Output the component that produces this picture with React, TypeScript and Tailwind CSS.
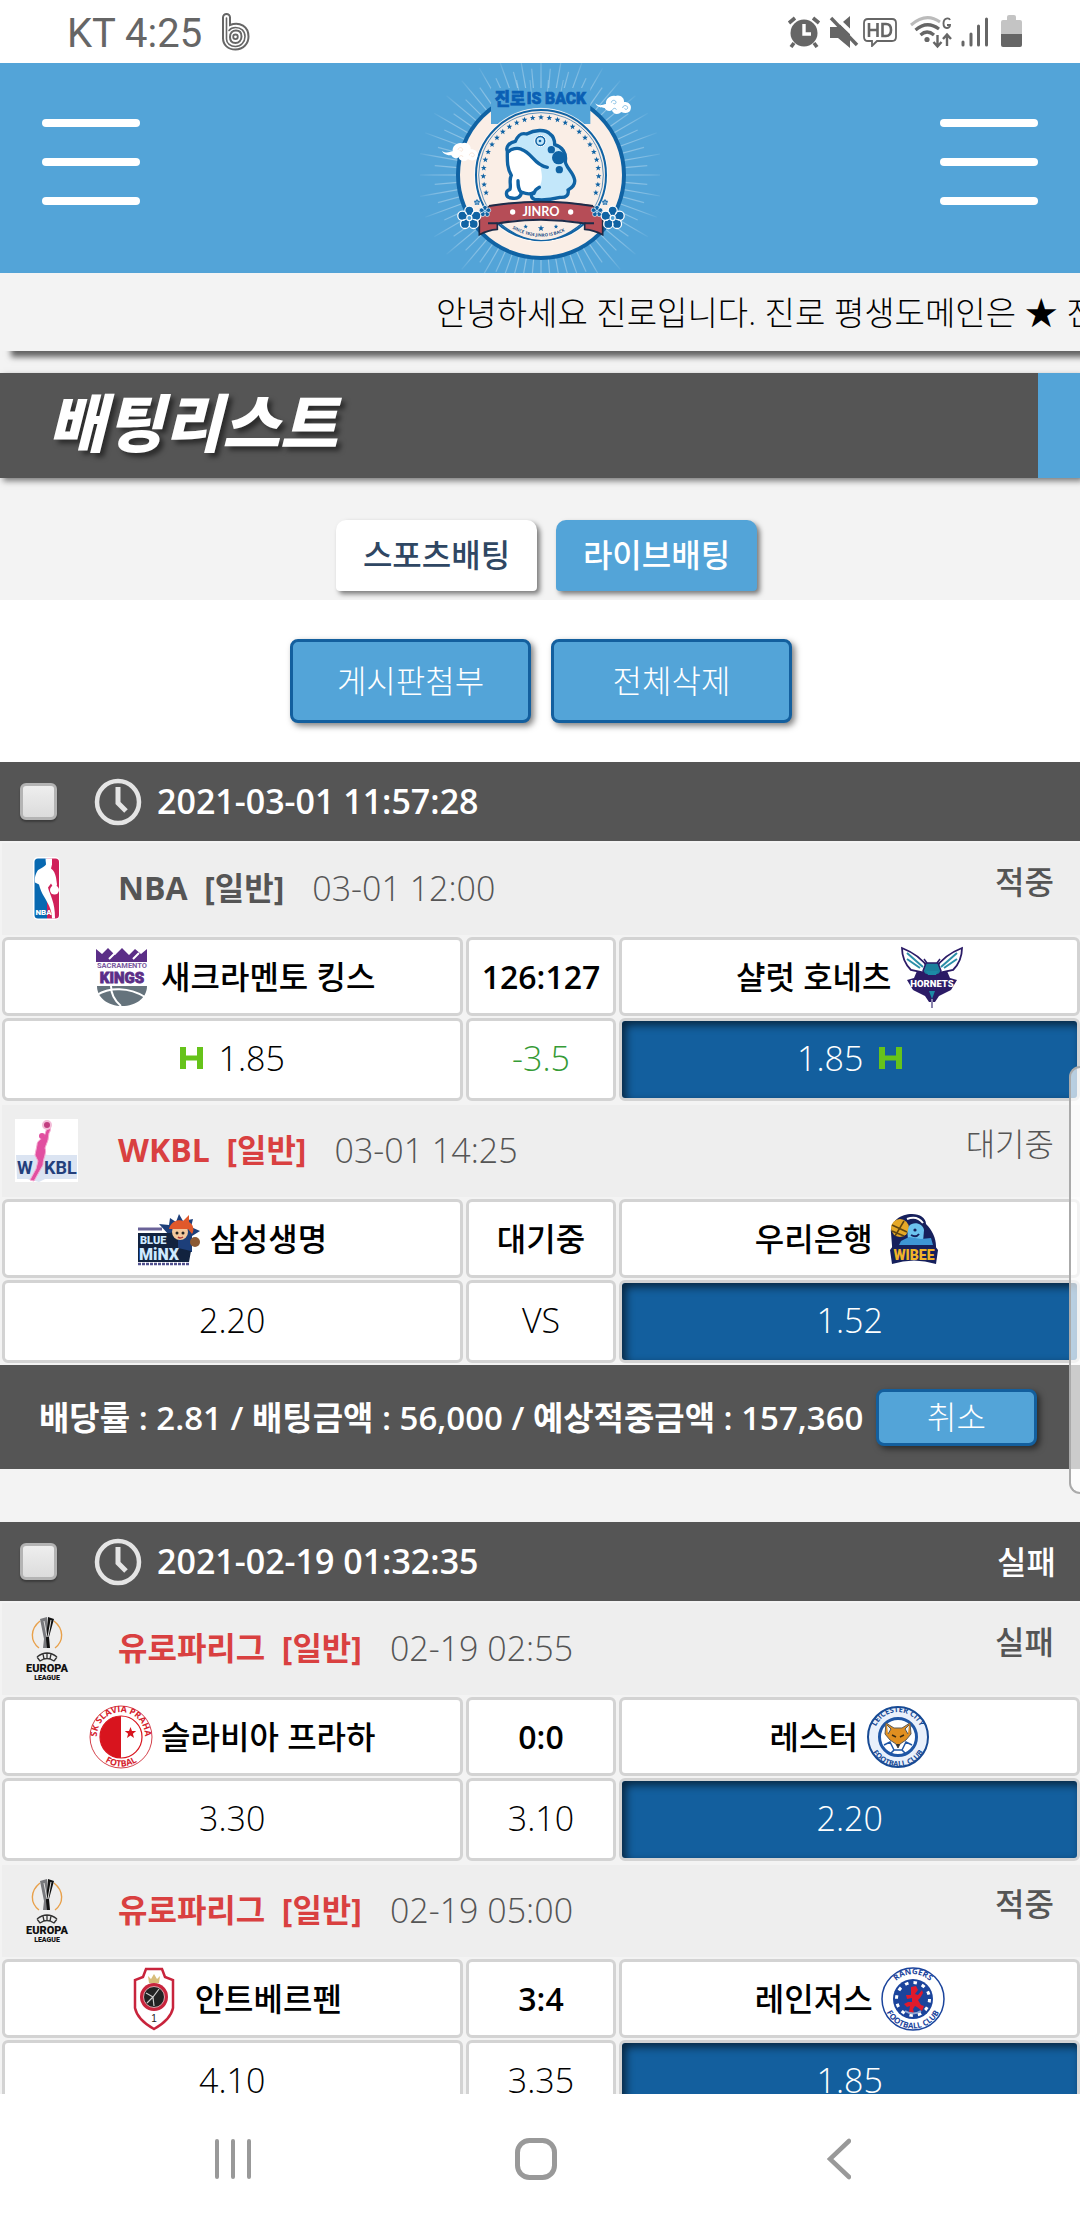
import type { ReactNode } from "react";

/* ---------- status bar icons ---------- */

const BandIcon = () => (
  <svg viewBox="0 0 30 38" className="h-[38px] w-[30px]" fill="none" stroke="#666" strokeLinecap="round">
    <path d="M3 26V4.500a3.500 3.500 0 0 1 7 0V12c10-4 18.500 2 18.500 11.500C28.500 31 23 36.500 15.500 36.500S3 32 3 25" strokeWidth="2" />
    <path d="M6.500 5v21c0 4.500 4 7.500 9 7.500 5.500 0 9.500-4.500 9.500-10s-4-9-9.500-9c-3 0-5 1-6.500 3" strokeWidth="1.600" />
    <path d="M10 24c0-4 2.500-6.500 6-6.500s5.500 2.500 5.500 6-2.500 6.500-6 6.500-5.500-2.500-5.500-6z" strokeWidth="2" />
    <circle cx="15.500" cy="23.800" r="2.300" strokeWidth="1.800" />
  </svg>
);

const AlarmIcon = () => (
  <svg viewBox="0 0 34 32" className="h-8 w-[34px]">
    <circle cx="17" cy="17" r="13.500" fill="#666" />
    <path d="M7 27l-3 4M27 27l3 4M2 7l6-5M32 7l-6-5" stroke="#666" strokeWidth="3.600" />
    <path d="M17 8v10h7" fill="none" stroke="#fff" strokeWidth="3.400" />
  </svg>
);

const MuteIcon = () => (
  <svg viewBox="0 0 30 32" className="h-8 w-[30px]">
    <path d="M1 11h7L21 0v32L9 22H1z" fill="#666" />
    <path d="M4-1 32 26" stroke="#fff" strokeWidth="4" />
    <path d="M2 2 28 29" stroke="#666" strokeWidth="3.400" />
  </svg>
);

const HdIcon = () => (
  <svg viewBox="0 0 34 30" className="h-[30px] w-[34px]">
    <path d="M5 2h24q4 0 4 4v14q0 4-4 4H14l-5 5v-5H5q-4 0-4-4V6q0-4 4-4z" fill="none" stroke="#666" strokeWidth="1.800" />
    <path d="M6 6v14M14.500 6v14M6 13h8.500M19.500 7v12h3.500c4 0 5-3 5-6s-1-6-5-6z" fill="none" stroke="#666" strokeWidth="2.600" />
  </svg>
);

const WifiIcon = () => (
  <svg viewBox="0 0 44 34" className="h-[34px] w-11" fill="none">
    <path d="M2 10Q17-3 31 7" stroke="#bbb" strokeWidth="3" />
    <path d="M6.500 15Q18 5 30 14M11.500 20Q18 14 25 20" stroke="#666" strokeWidth="3.200" />
    <circle cx="18" cy="24.500" r="2.600" fill="#666" />
    <path d="M28.500 20v11M24.500 27l4 4.500 4-4.500M38 31V20M34 24l4-4.500 4 4.500" stroke="#666" strokeWidth="2.400" />
    <path d="M41 5c-1-2.500-6.500-2.500-6.500 3.500s6.500 5.500 6.500 1.500H38" stroke="#666" strokeWidth="1.900" />
  </svg>
);

const SignalIcon = () => (
  <svg viewBox="0 0 28 30" className="h-[30px] w-7" stroke="#666" strokeWidth="3" strokeLinecap="round">
    <path d="M2 25v3M10 17v11M17.500 9v19M25.500 2v26" />
  </svg>
);

const BatteryIcon = () => (
  <svg viewBox="0 0 21 33" className="h-[33px] w-[21px]">
    <path d="M6 2q0-2 2-2h5q2 0 2 2v3h4q2 0 2 2v12H0V7q0-2 2-2h4z" fill="#c4c4c4" />
    <path d="M0 19h21v11q0 2-2 2H2q-2 0-2-2z" fill="#666" />
  </svg>
);

/* ---------- brand emblem ---------- */

const starPath = (cx: number, cy: number, r: number) =>
  Array.from({ length: 10 }, (_, i) => {
    const rad = i % 2 ? r * 0.42 : r;
    const a = (Math.PI / 5) * i - Math.PI / 2;
    return `${i ? "L" : "M"}${(cx + rad * Math.cos(a)).toFixed(1)} ${(cy + rad * Math.sin(a)).toFixed(1)}`;
  }).join("") + "Z";

const Flower = ({ x, y, r }: { x: number; y: number; r: number }) => (
  <g>
    {[0, 1, 2, 3, 4].map((i) => {
      const a = (i * 72 - 90) * (Math.PI / 180);
      return (
        <circle key={i} cx={x + r * 0.58 * Math.cos(a)} cy={y + r * 0.58 * Math.sin(a)} r={r * 0.36} fill="#1063a4" stroke="#fff" strokeWidth={r * 0.1} />
      );
    })}
    <circle cx={x} cy={y} r={r * 0.42} fill="#1063a4" />
    <circle cx={x} cy={y} r={r * 0.2} fill="#53a4d8" stroke="#fff" strokeWidth={r * 0.1} />
    {[0, 1, 2, 3, 4].map((i) => {
      const a = (i * 72 - 54) * (Math.PI / 180);
      return (
        <path key={i} d={`M${x + r * 0.25 * Math.cos(a)} ${y + r * 0.25 * Math.sin(a)}L${x + r * 0.55 * Math.cos(a)} ${y + r * 0.55 * Math.sin(a)}`} stroke="#fff" strokeWidth={r * 0.08} />
      );
    })}
  </g>
);

const Cloud = ({ x, y, tint }: { x: number; y: number; tint: string }) => (
  <g transform={`translate(${x} ${y})`}>
    <path d="M0 24c12 10 22 4 32 2-2-16 14-28 28-24 12-6 28 4 26 18 14 0 24 8 20 22-2 12-18 14-28 8-10 10-26 6-28-6-8 8-20 0-22-6-12 0-24-4-28-14z" fill="#fff" />
    <g fill="none" stroke={tint} strokeWidth="2">
      <path d="M48 22c0-8 12-10 14-2 1 5-6 8-8 3" />
      <path d="M82 38c0-9 14-10 15-1 0 6-8 7-9 2" />
      <path d="M52 44c0-6 10-7 11-1" />
    </g>
  </g>
);

const Emblem = () => (
  <svg viewBox="0 9 720 630" className="h-[210px] w-60" role="img" aria-label="진로 IS BACK">
    <defs>
      <radialGradient id="rayFade" gradientUnits="userSpaceOnUse" cx="363" cy="345" r="380">
        <stop offset="0.6" stopColor="#fff" stopOpacity="0.4" />
        <stop offset="0.85" stopColor="#fff" stopOpacity="0.25" />
        <stop offset="1" stopColor="#fff" stopOpacity="0" />
      </radialGradient>
      <path id="motto" d="M268 500Q363 560 458 500" />
    </defs>
    {Array.from({ length: 72 }, (_, i) => {
      const a = (i * 5 * Math.PI) / 180;
      const len = i % 2 ? 320 : 370;
      return (
        <path key={i} d={`M${363 + 200 * Math.cos(a)} ${345 + 200 * Math.sin(a)}L${363 + len * Math.cos(a)} ${345 + len * Math.sin(a)}`} stroke="url(#rayFade)" strokeWidth="3.500" />
      );
    })}
    <circle cx="363" cy="345" r="249" fill="#faeee6" stroke="#1063a4" strokeWidth="12" />
    <path d="M213 84H511V192H213z" fill="#53a4d8" />
    <path d="M290 60l12 60M330 60l6 60M385 60l-4 60M430 60l-12 60" stroke="#fff" strokeOpacity="0.25" strokeWidth="3" />
    <circle cx="363" cy="345" r="200" fill="#faeee6" stroke="#fff" strokeWidth="2" />
    <circle cx="363" cy="345" r="195" fill="none" stroke="#1063a4" strokeWidth="6" />
    <circle cx="363" cy="345" r="187" fill="none" stroke="#1063a4" strokeWidth="2" />
    {Array.from({ length: 27 }, (_, i) => {
      const a = ((i - 13) * 8.3 - 90) * (Math.PI / 180);
      return <path key={i} d={starPath(363 + 173 * Math.cos(a), 345 + 173 * Math.sin(a), 9)} fill="#1063a4" />;
    })}
    <g fill="#0a5fb4" stroke="#0a5fb4" strokeWidth="2">
      <text x="224" y="134" fontSize="50" fontWeight="900" fontFamily='"Noto Sans CJK KR", sans-serif'>진로</text>
      <text x="320" y="132" fontSize="47" fontWeight="900" fontFamily="Roboto, sans-serif">IS BACK</text>
    </g>
    <path d="M262 274c-6-14 6-26 24-30 6-14 14-28 34-22 22-12 56-16 70 0 12 8 14 18 14 32 22 6 36 24 32 50 0 18 24 32 28 56 2 16-8 24-20 30 4 14-6 24-24 22-24 6-50 10-76 6-12-4-12-14-4-20-14 8-26 2-36-2 0 14-12 22-30 18-20-2-18-22-4-26 4-14-4-26 4-42-14-24-12-46-12-72z" fill="#c3e7fa" />
    <path d="M264 276c10-10 28-14 40-8 24 8 34 28 56 46 6 28 10 44-2 68l-14 20c-14 2-32 0-40-8-2 16-20 18-30 16-18-2-14-16-4-22 2-14-4-26 4-42-12-22-14-50-10-70z" fill="#fff" />
    <g fill="none" stroke="#1063a4" strokeWidth="10" strokeLinecap="round" strokeLinejoin="round">
      <path d="M262 274c-6-14 6-26 24-30 6-14 14-28 34-22 22-12 56-16 70 0 12 8 14 18 14 32 22 6 36 24 32 50 0 18 24 32 28 56 2 16-8 24-20 30 4 14-6 24-24 22-24 6-50 10-76 6-12-4-12-14-4-20-14 8-26 2-36-2 0 14-12 22-30 18-20-2-18-22-4-26 4-14-4-26 4-42-14-24-12-46-12-72" />
      <path d="M264 276c10-10 28-14 40-8 32 10 40 48 78 54M294 362c0 14 0 26 10 36M342 400c2-8 8-14 16-18" />
    </g>
    <circle cx="361" cy="243" r="17" fill="#1063a4" stroke="#fff" strokeWidth="3" />
    <circle cx="361" cy="243" r="11" fill="#c3e7fa" />
    <circle cx="360" cy="243" r="4" fill="#1063a4" />
    <circle cx="394" cy="269" r="11" fill="#1063a4" />
    <circle cx="416" cy="293" r="20" fill="#1063a4" />
    <circle cx="418" cy="329" r="11" fill="#1063a4" />
    <path d="M242 492Q363 592 484 492" fill="#faeee6" stroke="#1063a4" strokeWidth="4" />
    <path d="M207 440 178 460V524Q204 510 232 508V490zM519 440 548 460V524Q522 510 494 508V490z" fill="#b64d57" stroke="#1c2c49" strokeWidth="5" />
    <path d="M207 436Q363 412 519 436V486L490 488Q363 466 236 488L207 486z" fill="#b64d57" />
    <path d="M207 438Q363 412 519 438M204 490H236Q363 468 490 490H522" fill="none" stroke="#1c2c49" strokeWidth="6" />
    <text x="363" y="468" textAnchor="middle" fontSize="38" fontWeight="700" fill="#fff" fontFamily='Lato, "Open Sans", sans-serif'>JINRO</text>
    <circle cx="278" cy="456" r="8" fill="#fff" />
    <circle cx="452" cy="456" r="8" fill="#fff" />
    <path d={starPath(317, 500, 7) + starPath(363, 505, 10) + starPath(408, 500, 7)} fill="#1063a4" />
    <text fontSize="13" fontWeight="700" fill="#1c4f86" fontFamily='"Open Sans", sans-serif'>
      <textPath href="#motto" startOffset="10">SINCE 1924 JINRO IS BACK</textPath>
    </text>
    <Flower x={148} y={474} r={38} />
    <Flower x={578} y={474} r={38} />
    <Flower x={195} y={454} r={19} />
    <Flower x={531} y={454} r={19} />
    <Flower x={171} y={427} r={10} />
    <Flower x={555} y={427} r={10} />
    <Cloud x={526} y={106} tint="#53a4d8" />
    <Cloud x={66} y={248} tint="#f3d9c8" />
  </svg>
);

/* ---------- league and team logos ---------- */

const NbaLogo = () => (
  <svg viewBox="0 0 64 64" className="size-16 shrink-0">
    <rect x="18" y="0" width="27" height="63" rx="5" fill="#fff" />
    <path d="M23 1.500h9v60h-9q-3.500 0-3.500-3.500V5q0-3.500 3.500-3.500z" fill="#0869b1" />
    <path d="M32 1.500h8.500q3.500 0 3.500 3.500v53q0 3.500-3.500 3.500H32z" fill="#d0215a" />
    <path d="M31 1.500h6v6l-1 4c3 2 4 5 5 9l1 7-2 6-4-7-3 4c2 8 7 14 7 31h-3c0-9-4-15-8-22-2-3-4-8-5-12l-4-2c-1-6 2-12 4-13 3-2 6-3 7-5 0-3-1-5 0-7z" fill="#fff" />
    <circle cx="39.500" cy="33" r="4.500" fill="#fff" />
    <text x="20.500" y="58" fontSize="8" fontWeight="900" fill="#fff" fontFamily="Roboto, sans-serif">NBA</text>
  </svg>
);

const WkblLogo = () => (
  <svg viewBox="0 0 64 64" className="size-16 shrink-0">
    <rect width="63" height="63" fill="#fff" />
    <path d="M1 36h22l5-1 5 1h29v24H30l-6 3-12-3H2z" fill="#dbe4f2" />
    <g fontSize="18" fontWeight="700" fill="#243f7c" fontFamily="Roboto, sans-serif">
      <text x="2" y="55">W</text>
      <text x="29" y="55">KBL</text>
    </g>
    <path d="M33 6c3 0 3 6 1 8l-1 7-3 8c2 5-2 10-2 17l-4 7-5 9-4-1 6-11 2-8-3-6 2-10c0-4 4-6 7-8z" fill="#e14fa0" stroke="#f5a9d0" strokeWidth="1" />
    <circle cx="27" cy="17" r="3" fill="#e14fa0" />
    <circle cx="32" cy="6" r="4" fill="#c23d80" stroke="#f3bcd8" strokeWidth="2" />
  </svg>
);

const EuropaLogo = () => (
  <svg viewBox="0 0 64 64" className="size-16 shrink-0">
    <path d="M25 4C15 12 15 24 24 31M39 4c10 8 10 20 1 27" fill="none" stroke="#e8a04a" strokeWidth="1.400" />
    <path d="M25 2l7-2v20l2 11h-6l1-9z" fill="#77787c" />
    <path d="M33 0l6 2-5 18 1 11h-3l-1-9z" fill="#111" />
    <path d="M29 4l3 16M36 3l-3 17" stroke="#ddd" strokeWidth="1" />
    <path d="M22 40q10-8 20 0M25 44q7-5 14 0M22 40l3 4M42 40l-3 4M28 37l1 5M36 37l-1 5M32 36v6" fill="none" stroke="#333" strokeWidth="1.300" />
    <text x="32" y="55" textAnchor="middle" fontSize="11" fontWeight="900" fill="#111" fontFamily="Roboto, sans-serif">EUROPA</text>
    <text x="32" y="63" textAnchor="middle" fontSize="7" fontWeight="900" fill="#111" fontFamily="Roboto, sans-serif">LEAGUE</text>
  </svg>
);

const KingsLogo = () => (
  <svg viewBox="0 0 64 64" className="size-16 shrink-0">
    <path d="M7 4l6 5 6-6 7 7 7-7 7 7 6-6 6 5 6-5v13H7z" fill="#5b2e87" />
    <path d="M20 14l6-6M44 14l6-6" stroke="#fff" strokeWidth="2" />
    <text x="33" y="23" textAnchor="middle" fontSize="7.500" fontWeight="700" fill="#7a5aa0" fontFamily="Roboto, sans-serif">SACRAMENTO</text>
    <text x="33" y="38" textAnchor="middle" fontSize="15" fontWeight="900" fill="#5b2e87" stroke="#5b2e87" strokeWidth="0.8" fontFamily="Roboto, sans-serif">KINGS</text>
    <path d="M8 41h50c0 12-11 20-25 20S8 53 8 41z" fill="#65737c" />
    <path d="M8 50c12-8 32-8 48 2M22 41c0 8 4 15 10 20" fill="none" stroke="#fff" strokeWidth="2" />
  </svg>
);

const HornetsLogo = () => (
  <svg viewBox="0 0 64 64" className="size-16 shrink-0">
    <path d="M3 3c10 4 20 10 26 20l-3 5-14-3c-6-6-9-14-9-22zM63 3c-10 4-20 10-26 20l3 5 14-3c6-6 9-14 9-22z" fill="#fff" stroke="#2b1b66" strokeWidth="1.800" />
    <path d="M8 8l16 14M8 14l13 9M58 8 42 22M58 14l-13 9" stroke="#2b8fa8" strokeWidth="2" />
    <path d="M28 18l-3-4M38 18l3-4" stroke="#2b1b66" strokeWidth="1.500" />
    <path d="M27 18h12l3 8-3 6H27l-3-6z" fill="#1c7f9c" stroke="#2b1b66" strokeWidth="1.500" />
    <path d="M18 26l10 3h10l10-3 3 7 7 2-6 10-12 6-4 6h-6l-4-6-12-6-6-10 7-2z" fill="#2b1b66" />
    <path d="M27 26h12l-2 4h-8zM30 46h6l-3 8z" fill="#1c8aa5" />
    <text x="33" y="42" textAnchor="middle" fontSize="9.500" fontWeight="900" fill="#fff" fontFamily="Roboto, sans-serif">HORNETS</text>
    <path d="M33 54v9" stroke="#8a84ad" strokeWidth="2" />
  </svg>
);

const BlueMinxLogo = () => (
  <svg viewBox="0 0 64 64" className="size-16 shrink-0">
    <path d="M22 17l10 1 1-7 6 4 3-8 4 7 10-2-2 8 9 4-8 5v16H32V28z" fill="#1d3f7a" />
    <path d="M1 26h32l8-3v18l13 3-2 11H1z" fill="#12233f" />
    <path d="M1 22h24" stroke="#6a6298" strokeWidth="3" />
    <circle cx="43" cy="25" r="8" fill="#f3c79c" />
    <path d="M32 22c2-8 10-10 14-8l6-6v7c4 2 6 8 3 12l-4-5z" fill="#e0592b" />
    <circle cx="40" cy="26" r="1.500" fill="#222" />
    <circle cx="46" cy="26" r="1.500" fill="#222" />
    <path d="M41 30q2 2 5 0" stroke="#a33" strokeWidth="1.500" fill="none" />
    <circle cx="58" cy="35" r="5" fill="#8c5a34" />
    <g fontWeight="900" fill="#cfeaff" fontFamily="Roboto, sans-serif">
      <text x="3" y="37" fontSize="11">BLUE</text>
      <text x="2" y="53" fontSize="16">MiNX</text>
    </g>
    <path d="M1 57h52" stroke="#51508f" strokeWidth="2.500" strokeDasharray="3 1" />
  </svg>
);

const WibeeLogo = () => (
  <svg viewBox="0 0 64 64" className="size-16 shrink-0">
    <path d="M10 26C9 14 20 7 31 7c8 0 14 4 14 10 6 6 10 14 10 22v12H12z" fill="#16205c" />
    <circle cx="19" cy="21" r="9" fill="#e5a827" />
    <path d="M11 18l15 7M14 29l9-15M11 24l12 5" stroke="#5e4512" strokeWidth="1.500" />
    <path d="M26 12q10-4 16 4" stroke="#fff" strokeWidth="2" fill="none" />
    <path d="M28 19c4-5 14-3 15 4l-1 12H28c-2-5-2-11 0-16z" fill="#6cc2ee" />
    <path d="M20 34l8-4 12 2 10-1 2 7H18z" fill="#3e95d4" />
    <circle cx="34" cy="23" r="1.600" fill="#16205c" />
    <path d="M30 28q5 3 8-1" stroke="#16205c" strokeWidth="2" fill="none" />
    <path d="M12 39q21 4 42 0l3 4-2 14q-22-7-44 0L9 43z" fill="#16205c" />
    <text x="33" y="53" textAnchor="middle" fontSize="14" fontWeight="900" fill="#f0b429" fontFamily="Roboto, sans-serif">WIBEE</text>
  </svg>
);

const RingText = ({ id, top, bottom, color, size }: { id: string; top: string; bottom: string; color: string; size: number }) => (
  <>
    <defs>
      <path id={`${id}Top`} d="M8.500 36A24 24 0 1 1 55.500 36" />
      <path id={`${id}Bottom`} d="M2.500 32A29.500 29.500 0 0 0 61.500 32" />
    </defs>
    <g fontSize={size} fontWeight="700" fill={color} fontFamily='"Open Sans", sans-serif' textAnchor="middle">
      <text><textPath href={`#${id}Top`} startOffset="50%">{top}</textPath></text>
      <text><textPath href={`#${id}Bottom`} startOffset="50%">{bottom}</textPath></text>
    </g>
  </>
);

const SlaviaLogo = () => (
  <svg viewBox="0 0 64 64" className="size-16 shrink-0">
    <circle cx="32" cy="32" r="31" fill="#fff" stroke="#d4424c" strokeWidth="1" />
    <RingText id="slavia" top="SK SLAVIA PRAHA" bottom="FOTBAL" color="#d5202c" size={8.8} />
    <circle cx="32" cy="32" r="21" fill="#fff" stroke="#d8141e" strokeWidth="1.200" />
    <path d="M32 11a21 21 0 0 0 0 42z" fill="#d8141e" />
    <path d={starPath(41.5, 28, 6)} fill="#d8141e" />
  </svg>
);

const LeicesterLogo = () => (
  <svg viewBox="0 0 64 64" className="size-16 shrink-0">
    <circle cx="32" cy="32" r="30" fill="#e9f0fb" stroke="#174a94" strokeWidth="2" />
    <RingText id="leicester" top="LEICESTER CITY" bottom="FOOTBALL CLUB" color="#174a94" size={7.5} />
    <circle cx="32" cy="32" r="18.500" fill="#fff" stroke="#1f56a5" strokeWidth="3" />
    <path d="M18 40l6-3 4 8-4 4M46 40l-6-3-4 8 4 4M28 45h8" fill="none" stroke="#1f56a5" strokeWidth="1.500" />
    <path d="M20 18l8 5h8l8-5 1 11-5 6-6 4-2 4-2-4-6-4-5-6z" fill="#e08f20" stroke="#5d5a58" strokeWidth="1" />
    <path d="M21 20l4 4-3 5M43 20l-4 4 3 5" fill="#eee" stroke="#555" strokeWidth="1" />
    <path d="M26 30l4 2M38 30l-4 2" stroke="#3a2a10" strokeWidth="1.500" />
    <path d="M30 39h4l-2 4z" fill="#333" />
  </svg>
);

const AntwerpLogo = () => (
  <svg viewBox="0 0 64 64" className="size-16 shrink-0">
    <path d="M23 2h16l3 8 8 3v28c-2 10-10 16-19 21C22 57 14 51 12 41V13l8-3z" fill="#fff" stroke="#c8243c" strokeWidth="2.500" />
    <path d="M25 9l3 3 3-5 3 5 3-3-1 7H26z" fill="#d8bd7a" />
    <circle cx="31" cy="30" r="14" fill="#c8243c" />
    <circle cx="31" cy="30" r="10.500" fill="#222" stroke="#f1c8ce" strokeWidth="0.800" />
    <path d="M23 26l7 4 6-8M30 30l1 9M24 36l6-6" stroke="#ccc" strokeWidth="1.200" fill="none" />
    <text x="31" y="55" textAnchor="middle" fontSize="10" fill="#222" fontFamily='"Liberation Sans", sans-serif'>1</text>
  </svg>
);

const RangersLogo = () => (
  <svg viewBox="0 0 64 64" className="size-16 shrink-0">
    <circle cx="32" cy="32" r="31" fill="#fff" stroke="#1b449c" strokeWidth="1.500" />
    <RingText id="rangers" top="RANGERS" bottom="FOOTBALL CLUB" color="#1b449c" size={8} />
    <circle cx="32" cy="32" r="20" fill="#1b449c" />
    <circle cx="32" cy="32" r="16.500" fill="none" stroke="#fff" strokeWidth="3" strokeDasharray="3.500 5.140" />
    <circle cx="32" cy="32" r="13" fill="#1b449c" />
    <path d="M30 20l5-1 2 4-3 4 3 1 4-5 1 3-3 5-2 2 3 5 3 1-2 5-5-4-2-1-2 3 1 4-5-1 1-6-3 1-3-3 4-2 4 0 0-4-5 1-1-4 5 0z" fill="#e01a2c" />
    <path d="M24 44q8 5 16 0" stroke="#8fa6d4" strokeWidth="2" fill="none" />
  </svg>
);

/* ---------- page parts ---------- */

const HandicapMark = () => (
  <svg viewBox="0 0 23 22" className="h-[22px] w-[23px]" aria-label="핸디캡">
    <path d="M3 0v22M20 0v22" stroke="#66c31a" strokeWidth="6" />
    <path d="M3 11h17" stroke="#66c31a" strokeWidth="5" />
  </svg>
);

const ClockIcon = () => (
  <svg viewBox="0 0 48 48" className="size-12" fill="none" stroke="#e4e4e4" strokeWidth="4.500">
    <circle cx="24" cy="24" r="21" />
    <path d="M24 9v16l8 8" strokeWidth="5" />
  </svg>
);

const MenuButton = ({ label }: { label: string }) => (
  <button type="button" aria-label={label} className="flex w-[98px] flex-col gap-[31px]">
    <span className="h-2 rounded-sm bg-white" />
    <span className="h-2 rounded-sm bg-white" />
    <span className="h-2 rounded-sm bg-white" />
  </button>
);

const Cell = ({ children, className = "" }: { children: ReactNode; className?: string }) => (
  <div className={`flex items-center justify-center rounded-md border-[3px] border-[#d3d3d3] ${className}`}>{children}</div>
);

type Match = {
  logo: ReactNode;
  league: string;
  red?: boolean;
  time: string;
  status: string;
  waiting?: boolean;
  home: string;
  homeLogo: ReactNode;
  score: string;
  away: string;
  awayLogo: ReactNode;
  homeOdds: string;
  middle: string;
  handicap?: boolean;
  awayOdds: string;
};

const MatchRow = ({ m }: { m: Match }) => (
  <section className="flex flex-col gap-0.5 py-0.5 pl-0.5">
    <header className="flex h-[92px] items-center bg-[#eee] pl-[13px] pr-[26px] text-[#555]">
      {m.logo}
      <h2 className={`mb-0.5 ml-[39px] whitespace-pre font-bold ${m.red ? "text-[#d94040]" : ""}`}>{m.league}  [일반]</h2>
      <time className="mb-0.5 ml-7 text-[34px] font-light">{m.time}</time>
      <span className={`mb-3.5 ml-auto ${m.waiting ? "font-light" : "font-medium"}`}>{m.status}</span>
    </header>
    <div className="grid grid-cols-[461fr_151fr_461fr] gap-x-[3px] gap-y-0.5">
      <Cell className="h-[79px] gap-2 bg-white font-medium">
        {m.homeLogo}
        <span>{m.home}</span>
      </Cell>
      <Cell className={`h-[79px] bg-white ${m.waiting ? "font-medium" : "font-semibold"}`}>{m.score}</Cell>
      <Cell className="h-[79px] gap-2 bg-white font-medium">
        <span>{m.away}</span>
        {m.awayLogo}
      </Cell>
      <Cell className="h-[83px] gap-4 bg-white pb-1 text-[34px] font-light">
        {m.handicap && <HandicapMark />}
        {m.homeOdds}
      </Cell>
      <Cell className={`h-[83px] bg-white pb-1 text-[34px] font-light ${m.handicap ? "text-[#369b36]" : ""}`}>{m.middle}</Cell>
      <Cell className="h-[83px] gap-4 bg-[#135f9e] pb-1 text-[34px] font-light text-white shadow-[inset_4px_4px_8px_rgba(0,0,0,0.6)]">
        {m.awayOdds}
        {m.handicap && <HandicapMark />}
      </Cell>
    </div>
  </section>
);

const SlipHeader = ({ date, result }: { date: string; result?: string }) => (
  <header className="flex h-[79px] items-center bg-[#555] pl-5 pr-6 text-white">
    <input
      type="checkbox"
      aria-label={`${date} 선택`}
      className="size-[37px] appearance-none rounded-md border-[3px] border-[#b4b4b4] bg-linear-to-b from-[#eee] to-[#dcdcdc] shadow-[0_2px_2px_rgba(0,0,0,0.3)]"
    />
    <span className="ml-[37px]"><ClockIcon /></span>
    <time className="mb-0.5 ml-[15px] text-[34px] font-semibold">{date}</time>
    {result && <span className="ml-auto font-medium">{result}</span>}
  </header>
);

const firstSlip: Match[] = [
  {
    logo: <NbaLogo />, league: "NBA", time: "03-01 12:00", status: "적중",
    home: "새크라멘토 킹스", homeLogo: <KingsLogo />, score: "126:127", away: "샬럿 호네츠", awayLogo: <HornetsLogo />,
    homeOdds: "1.85", middle: "-3.5", handicap: true, awayOdds: "1.85",
  },
  {
    logo: <WkblLogo />, league: "WKBL", red: true, time: "03-01 14:25", status: "대기중", waiting: true,
    home: "삼성생명", homeLogo: <BlueMinxLogo />, score: "대기중", away: "우리은행", awayLogo: <WibeeLogo />,
    homeOdds: "2.20", middle: "VS", awayOdds: "1.52",
  },
];

const secondSlip: Match[] = [
  {
    logo: <EuropaLogo />, league: "유로파리그", red: true, time: "02-19 02:55", status: "실패",
    home: "슬라비아 프라하", homeLogo: <SlaviaLogo />, score: "0:0", away: "레스터", awayLogo: <LeicesterLogo />,
    homeOdds: "3.30", middle: "3.10", awayOdds: "2.20",
  },
  {
    logo: <EuropaLogo />, league: "유로파리그", red: true, time: "02-19 05:00", status: "적중",
    home: "안트베르펜", homeLogo: <AntwerpLogo />, score: "3:4", away: "레인저스", awayLogo: <RangersLogo />,
    homeOdds: "4.10", middle: "3.35", awayOdds: "1.85",
  },
];

export default function App() {
  return (
    <div className="relative flex h-screen flex-col overflow-hidden bg-[#f3f3f3] font-['Open_Sans','Noto_Sans_CJK_KR',sans-serif] text-[32px] leading-none text-black">
      <div className="flex h-[63px] shrink-0 items-center bg-white pl-[67px] pr-[58px] pt-1 text-[#666]">
        <span className="font-['Roboto',sans-serif] text-[40px]">KT 4:25</span>
        <span className="mb-1 ml-[18px]"><BandIcon /></span>
        <div className="mb-1 ml-auto flex items-center">
          <AlarmIcon />
          <span className="ml-2"><MuteIcon /></span>
          <span className="ml-1"><HdIcon /></span>
          <span className="ml-3"><WifiIcon /></span>
          <span className="ml-2"><SignalIcon /></span>
          <span className="ml-3"><BatteryIcon /></span>
        </div>
      </div>

      <main className="min-h-0 flex-1 overflow-hidden">
        <header className="flex h-[210px] items-start justify-between bg-[#53a4d8] px-[42px]">
          <div className="mt-14"><MenuButton label="메뉴 열기" /></div>
          <a href="#home"><Emblem /></a>
          <div className="mt-14"><MenuButton label="내 정보 열기" /></div>
        </header>

        <div className="flex h-[78px] items-center whitespace-nowrap bg-[#f3f3f3] pl-[436px] text-[33px] font-light shadow-[11px_6px_6px_rgba(0,0,0,0.6)]">
          안녕하세요 진로입니다. 진로 평생도메인은 ★ 진로
        </div>

        <div className="mt-[22px] flex h-[105px] items-center border-r-[42px] border-[#53a4d8] bg-[#555] pb-3 pl-12 shadow-[3px_3px_6px_rgba(0,0,0,0.5)]">
          <h1 className="font-['Noto_Sans_CJK_KR',sans-serif] text-[63px] font-black italic text-white [text-shadow:4px_4px_5px_rgba(0,0,0,0.5)]">배팅리스트</h1>
        </div>

        <nav className="mt-[42px] flex justify-center gap-[19px] pl-[13px] pb-[9px]">
          <button type="button" className="h-[71px] w-[201px] rounded-t-[10px] rounded-b-sm bg-white pb-0.5 font-medium text-[#2f4763] shadow-[3px_3px_5px_rgba(0,0,0,0.5)]">스포츠배팅</button>
          <button type="button" className="h-[71px] w-[201px] rounded-t-[10px] rounded-b-sm bg-[#53a4d8] pb-0.5 font-medium text-white shadow-[3px_3px_5px_rgba(0,0,0,0.5)]">라이브배팅</button>
        </nav>

        <div className="flex justify-center gap-5 bg-white pt-[39px] pb-[39px] pl-0.5">
          <button type="button" className="h-[84px] w-[241px] rounded-lg border-[3px] border-[#135f9e] bg-[#53a4d8] font-light text-white shadow-[3px_3px_6px_rgba(0,0,0,0.5)]">게시판첨부</button>
          <button type="button" className="h-[84px] w-[241px] rounded-lg border-[3px] border-[#135f9e] bg-[#53a4d8] font-light text-white shadow-[3px_3px_6px_rgba(0,0,0,0.5)]">전체삭제</button>
        </div>

        <article>
          <SlipHeader date="2021-03-01 11:57:28" />
          {firstSlip.map((m) => <MatchRow key={m.time} m={m} />)}
          <footer className="flex h-[104px] items-center bg-[#555] pl-[39px] pr-[43px] text-white">
            <p className="whitespace-nowrap text-[33px] font-semibold">배당률 : 2.81 / 배팅금액 : 56,000 / 예상적중금액 : 157,360</p>
            <button type="button" className="ml-auto h-[57px] w-[161px] shrink-0 rounded-lg border-[3px] border-[#135f9e] bg-[#53a4d8] font-light shadow-[3px_3px_6px_rgba(0,0,0,0.5)]">취소</button>
          </footer>
        </article>

        <article className="mt-[53px]">
          <SlipHeader date="2021-02-19 01:32:35" result="실패" />
          {secondSlip.map((m) => <MatchRow key={m.time} m={m} />)}
        </article>
      </main>

      <nav className="grid h-[126px] shrink-0 grid-cols-3 items-center bg-white pl-[82px] pr-[90px] pt-1">
        <button type="button" aria-label="최근 앱" className="flex justify-center">
          <svg viewBox="0 0 40 42" className="h-[42px] w-10" stroke="#999" strokeWidth="4" strokeLinecap="round"><path d="M4 3v36M20 3v36M36 3v36" /></svg>
        </button>
        <button type="button" aria-label="홈" className="flex justify-center">
          <svg viewBox="0 0 42 42" className="size-[42px]" fill="none" stroke="#999" strokeWidth="5"><rect x="2.500" y="2.500" width="37" height="37" rx="12" /></svg>
        </button>
        <button type="button" aria-label="뒤로" className="flex justify-center">
          <svg viewBox="0 0 24 42" className="h-[42px] w-6" fill="none" stroke="#999" strokeWidth="4.500" strokeLinecap="round"><path d="M22 3 3 21 22 39" /></svg>
        </button>
      </nav>

      <div className="absolute right-0 top-[1066px] h-[428px] w-[11px] rounded-l-[11px] border-2 border-r-0 border-[#aaa] bg-white/70" />
    </div>
  );
}
